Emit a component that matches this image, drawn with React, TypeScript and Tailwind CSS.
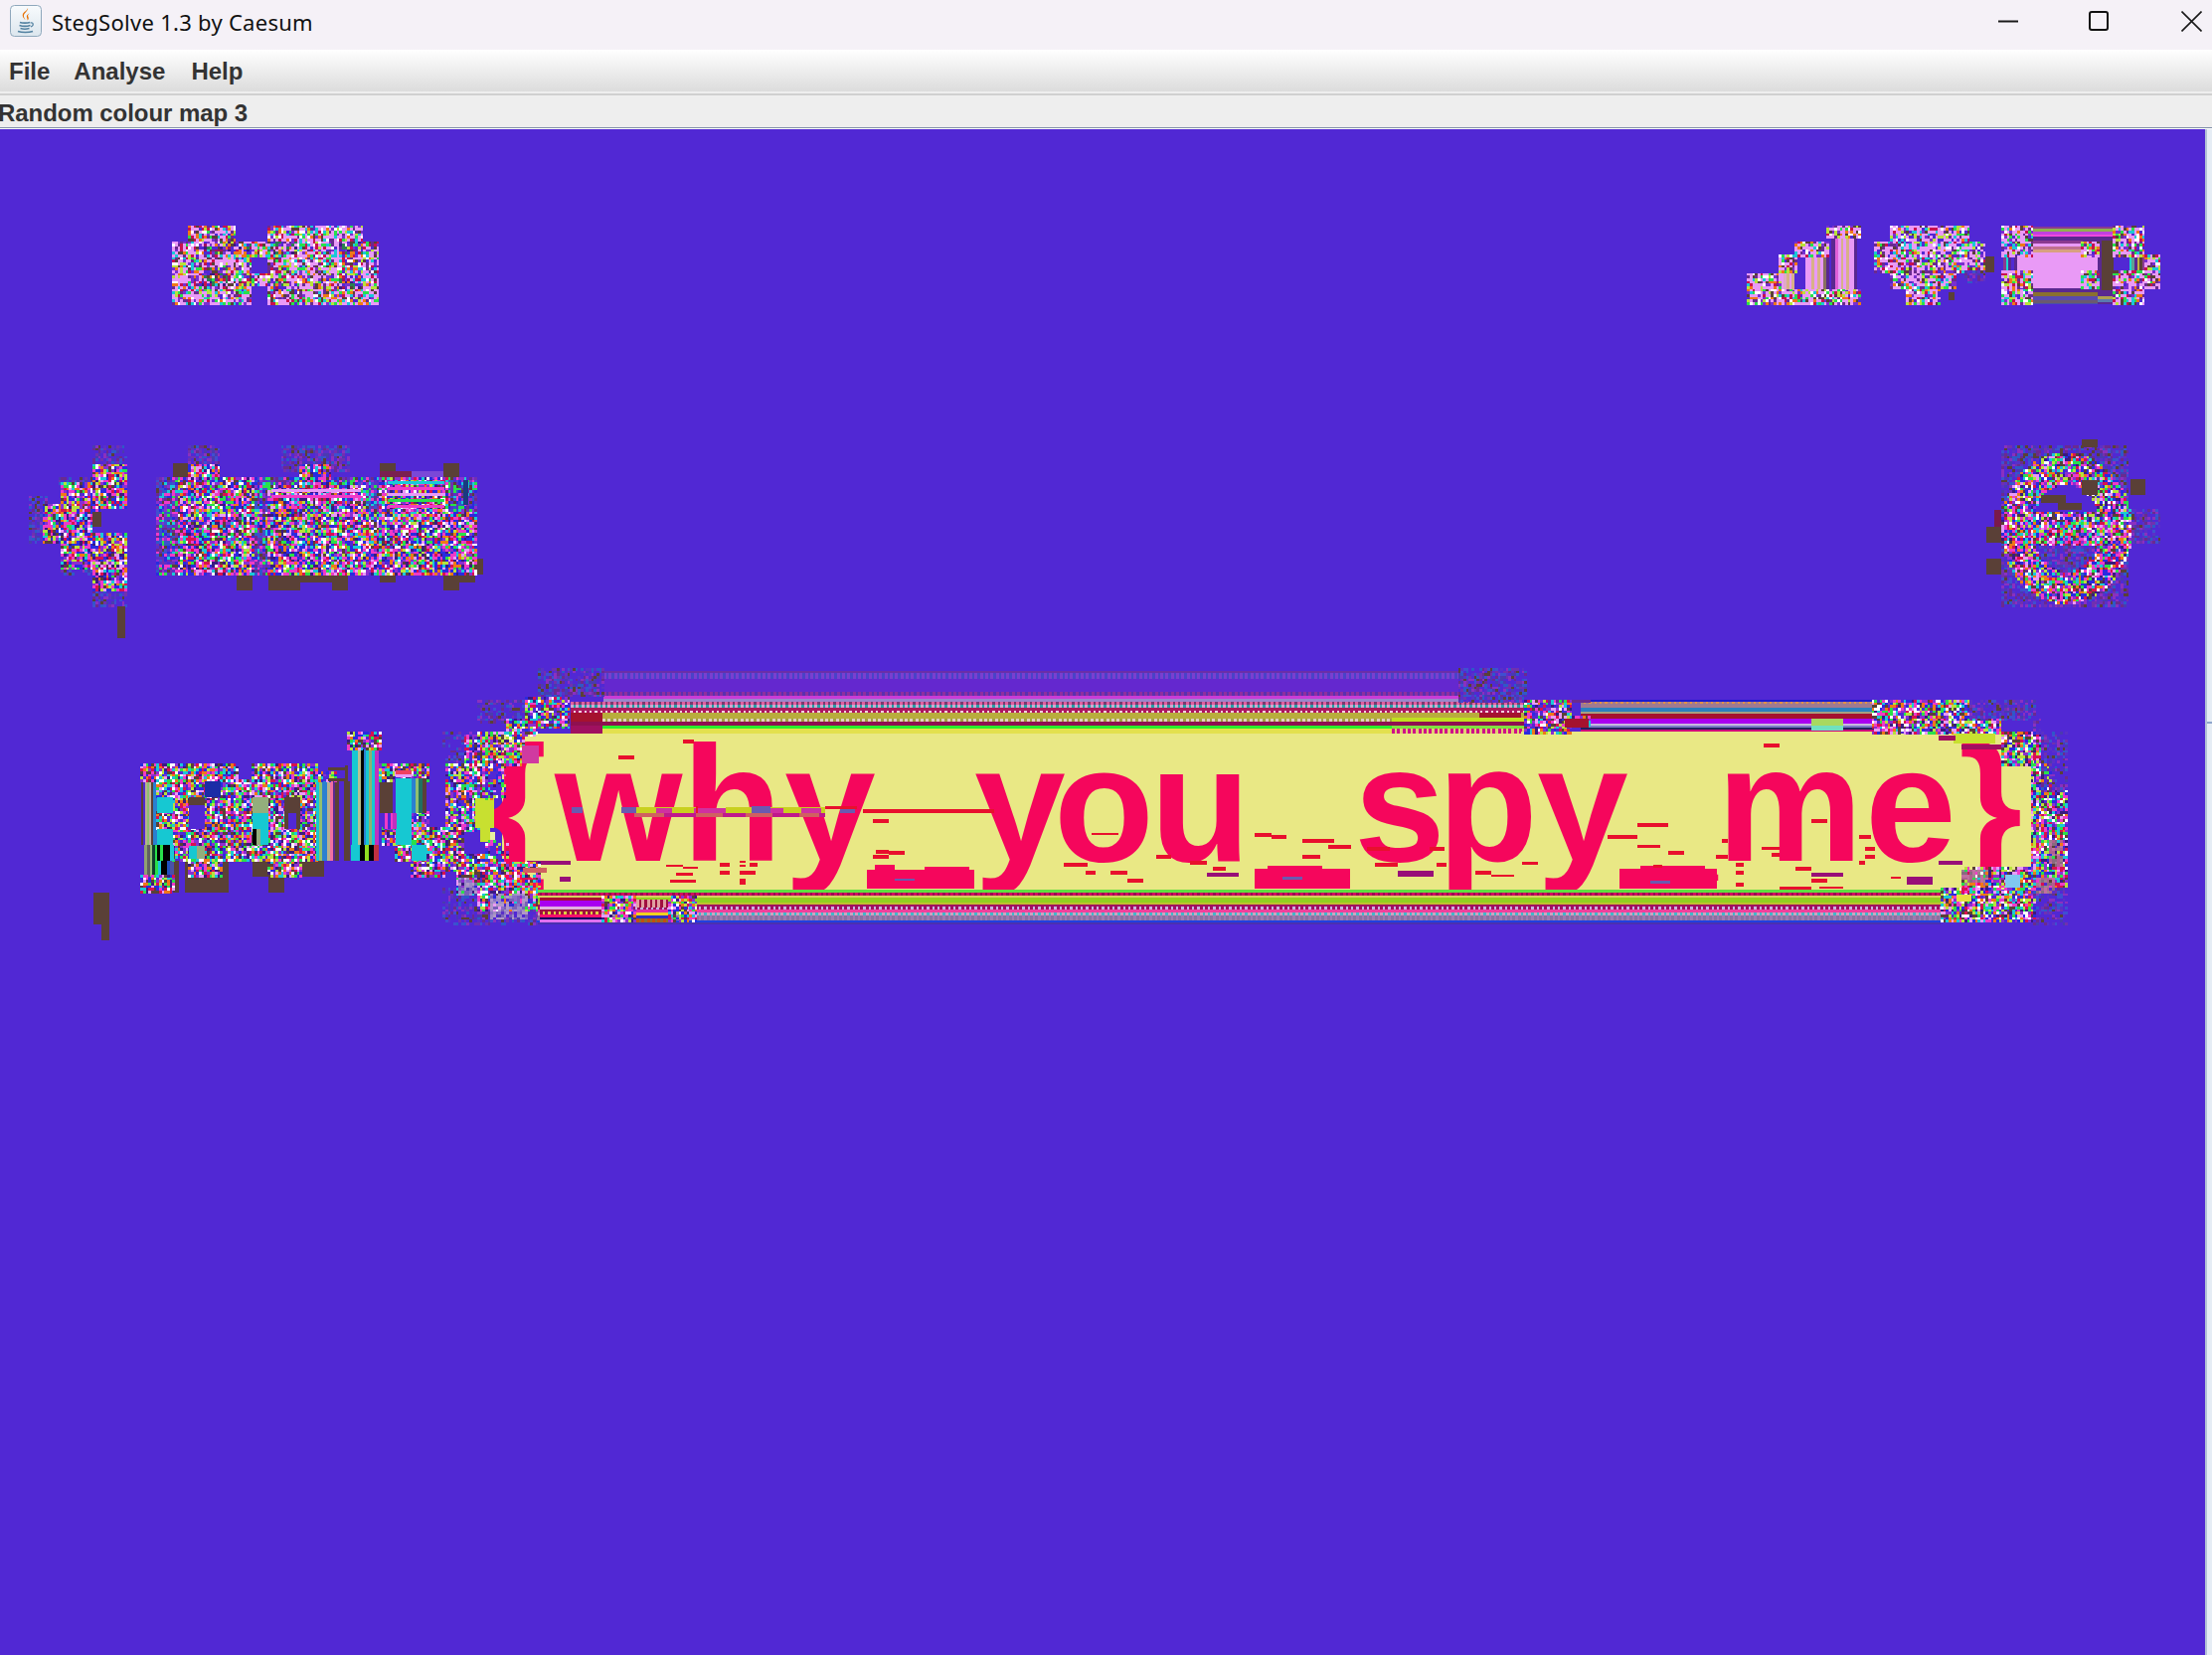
import React from 'react'

type Box = [number, number, number, number]

const CELL = 8 / 3

// zoomed crop coords -> page coords (all crops were 3x)
const at = (ox: number, oy: number, list: Box[]): Box[] =>
  list.map(([a, b, c, d]) => [ox + a / 3, oy + b / 3, ox + c / 3, oy + d / 3] as Box)

const BRIGHT = ['#e99af6', '#ffffff', '#29e04b', '#f07818', '#d8114f', '#8b2fd0', '#1ac8d8', '#3a1a80', '#b7e33a', '#f03ac8', '#2a2ae0', '#5a4037']
const PINK = ['#e99af6', '#e99af6', '#e99af6', '#e99af6', '#e99af6', '#ffffff', '#29e04b', '#f07818', '#c8114f', '#7a2fd0', '#1ac8d8', '#5a4037', '#b7e33a', '#6a2a90']
const TITLE = ['#f03ac8', '#2a2ae0', '#29e04b', '#1ac8d8', '#ffffff', '#e99af6', '#f07818', '#3a1a80', '#8b2fd0', '#5a4037', '#d8114f', '#b7e33a', '#f03ac8', '#2a2ae0']
const DIM = ['#5a30c8', '#3f4fd0', '#7030b0', '#6a2a90', '#4a3ab0', '#5a4037', '#2f58c8', '#5128d4', '#5128d4', '#8a30c0']
const SEAM = ['#5a30c8', '#3f4fd0', '#7030b0', '#6a2a90', '#2a2ae0', '#5a4037', '#2f58c8', '#f03ac8', '#1ac8d8', '#8b2fd0', '#29e04b']
const COUNTER = ['#5128d4', '#5128d4', '#7a2fd0', '#a01060', '#2a8050', '#5a4037', '#3a1a80', '#f07818']

const BROWN = '#5a4037'
const CYAN = '#16c8d2'
const YELLOW = '#e9e885'
const RED = '#f5065c'
const SPECK = '#e8102d'
const MAUVE = '#980e78'

function makeRandom(seed: number) {
  let s = seed
  return () => {
    s = (s + 0x6d2b79f5) | 0
    let t = Math.imul(s ^ (s >>> 15), 1 | s)
    t = (t + Math.imul(t ^ (t >>> 7), 61 | t)) ^ t
    return ((t ^ (t >>> 14)) >>> 0) / 4294967296
  }
}

function Noise({ boxes, palette, density = 1, seed = 1, mask }: {
  boxes: Box[]
  palette: string[]
  density?: number
  seed?: number
  mask?: (x: number, y: number) => boolean
}) {
  const rand = makeRandom(seed)
  const paths = new Map<string, string>()
  for (const [x1, y1, x2, y2] of boxes) {
    for (let i = Math.floor(x1 / CELL); i * CELL < x2 - 0.5; i++) {
      for (let j = Math.floor(y1 / CELL); j * CELL < y2 - 0.5; j++) {
        const r = rand()
        const pick = rand()
        if (r > density) continue
        const x = Math.round(i * CELL)
        const y = Math.round(j * CELL)
        if (mask && !mask(x, y)) continue
        const w = Math.round((i + 1) * CELL) - x
        const h = Math.round((j + 1) * CELL) - y
        const color = palette[Math.floor(pick * palette.length)]
        paths.set(color, (paths.get(color) ?? '') + `M${x} ${y}h${w}v${h}h-${w}z`)
      }
    }
  }
  return (
    <>
      {[...paths.entries()].map(([color, d]) => (
        <path key={color} d={d} fill={color} />
      ))}
    </>
  )
}

function Fill({ boxes, color }: { boxes: Box[]; color: string }) {
  const d = boxes.map(([a, b, c, e]) => `M${a} ${b}H${c}V${e}H${a}z`).join('')
  return <path d={d} fill={color} />
}

function VStripes({ box, colors }: { box: Box; colors: string[] }) {
  const [x1, y1, x2, y2] = box
  const w = (x2 - x1) / colors.length
  return (
    <>
      {colors.map((c, i) => (
        <rect key={i} x={x1 + i * w} y={y1} width={w + 0.5} height={y2 - y1} fill={c} />
      ))}
    </>
  )
}

function Bands({ x1, x2, rows }: { x1: number; x2: number; rows: [number, number, string, string?][] }) {
  return (
    <>
      {rows.map(([y1, y2, a, b], i) => {
        if (!b) return <rect key={i} x={x1} y={y1} width={x2 - x1} height={y2 - y1} fill={a} />
        let d = ''
        for (let x = x1; x < x2; x += CELL * 2) d += `M${Math.round(x)} ${y1}h3v${y2 - y1}h-3z`
        return (
          <g key={i}>
            <rect x={x1} y={y1} width={x2 - x1} height={y2 - y1} fill={a} />
            <path d={d} fill={b} />
          </g>
        )
      })}
    </>
  )
}

function StatusBar() {
  const z = (list: Box[]) => at(1720, 200, list)
  return (
    <>
      <Noise seed={11} palette={PINK} boxes={at(0, 200, [[570, 80, 710, 130], [525, 130, 760, 315], [760, 130, 810, 170], [760, 225, 810, 265], [810, 80, 1095, 130], [810, 130, 1145, 315]])} density={0.97} />
      <Noise seed={16} palette={COUNTER} density={0.6} boxes={at(0, 200, [[610, 130, 760, 165], [610, 215, 690, 265], [810, 130, 890, 165], [810, 250, 890, 285], [1030, 130, 1090, 165], [1030, 235, 1090, 270]])} />
      {/* signal */}
      {z([[212, 222, 265, 275]]).map((b, i) => <VStripes key={i} box={b} colors={['#e99af6', '#e0a8c8', '#d8b088', '#e99af6', '#d8b088', '#5128d4']} />)}
      {z([[288, 172, 352, 275]]).map((b, i) => <VStripes key={i} box={b} colors={['#e99af6', '#e99af6', '#d8b088', '#e99af6', '#d8b088', '#e99af6', '#8a7060']} />)}
      {z([[378, 120, 436, 275]]).map((b, i) => <VStripes key={i} box={b} colors={['#e060d8', '#e99af6', '#d8b088', '#e99af6', '#d8b088', '#e99af6', '#e99af6']} />)}
      <Fill color="#5a2890" boxes={z([[366, 120, 378, 275], [436, 120, 444, 275], [352, 172, 360, 275]])} />
      <Noise seed={12} palette={PINK} boxes={z([[115, 225, 210, 315], [210, 175, 265, 222], [210, 275, 360, 315], [260, 128, 355, 172], [355, 80, 450, 120], [355, 275, 450, 315]])} density={0.97} />
      {/* wifi */}
      <Noise seed={13} palette={PINK} boxes={z([[548, 80, 785, 128], [500, 128, 832, 222], [548, 222, 738, 270], [595, 270, 690, 315]])} density={0.9} />
      <Fill color={BROWN} boxes={z([[832, 175, 858, 222], [720, 282, 738, 305]])} />
      <Noise seed={14} palette={DIM} boxes={z([[770, 222, 832, 250]])} density={0.6} />
      {/* battery */}
      <Bands x1={1720 + 975 / 3} x2={1720 + 1220 / 3} rows={[[228, 230, '#8a3a90'], [230, 233, '#90b050'], [233, 236, '#c040e0'], [236, 238, '#f048e0'], [238, 242, '#5a2890']]} />
      <Bands x1={1720 + 975 / 3} x2={1720 + 1125 / 3} rows={[[242, 245, '#8a3a90'], [245, 248, '#e99af6'], [248, 251, '#c07090'], [251, 254, '#d8a080'], [254, 257, '#e99af6']]} />
      <Fill color="#e99af6" boxes={z([[925, 170, 1170, 270]])} />
      <Fill color="#5a2890" boxes={z([[1125, 125, 1170, 128], [1170, 125, 1182, 275], [975, 270, 1220, 282]])} />
      <Fill color={BROWN} boxes={z([[1182, 125, 1218, 275]])} />
      {z([[885, 170, 925, 222]]).map((b, i) => <VStripes key={i} box={b} colors={['#8a3a90', '#18d8d0', '#5a2890', '#5128d4', '#5a2890']} />)}
      {z([[1265, 170, 1312, 222]]).map((b, i) => <VStripes key={i} box={b} colors={['#18d8d0', '#60a090', '#5a2890', '#c0b040', '#5a4037', '#8a3a90']} />)}
      <Bands x1={1720 + 975 / 3} x2={1720 + 1170 / 3} rows={[[294, 298, '#8a7030'], [298, 302, '#5a4ab0'], [302, 306, '#4a50a8']]} />
      <Bands x1={1720 + 1170 / 3} x2={1720 + 1220 / 3} rows={[[294, 298, '#5a2890'], [298, 301, '#b0a050'], [301, 304, '#5a7ab0'], [304, 306, '#5a2890']]} />
      <Fill color="#6a5a70" boxes={z([[975, 305, 1170, 315]])} />
      <Noise seed={15} palette={PINK} boxes={z([[885, 80, 975, 170], [1222, 80, 1312, 170], [885, 222, 975, 315], [1222, 222, 1312, 315], [1125, 128, 1170, 170], [925, 222, 975, 270], [1125, 222, 1170, 270], [1312, 175, 1360, 270]])} density={0.95} />
    </>
  )
}

function NavBar() {
  const left = (list: Box[]) => at(0, 200, list)
  const right = (list: Box[]) => at(1720, 200, list)
  const gx = 1720 + 1072 / 3
  const gy = 200 + 990 / 3
  const ring = (x: number, y: number) => {
    const o = ((x - gx) / 66) ** 2 + ((y - gy) / 76) ** 2
    const i = ((x - gx) / 34) ** 2 + ((y - gy) / 44) ** 2
    const bar = Math.abs(y - gy) < 18 && Math.abs(x - gx) < 48
    return o < 1 && (i > 1 || bar)
  }
  return (
    <>
      {/* back arrow */}
      <Noise seed={21} palette={DIM} density={0.8} boxes={left([[280, 750, 380, 800], [90, 900, 140, 1040], [180, 845, 280, 870], [185, 1110, 280, 1135], [280, 1170, 380, 1230]])} />
      <Noise seed={22} palette={TITLE} density={0.97} boxes={left([[280, 800, 380, 930], [185, 860, 300, 945], [135, 925, 280, 1040], [185, 1010, 380, 1115], [280, 1040, 380, 1180]])} />
      <Fill color={BROWN} boxes={left([[355, 1230, 378, 1325], [280, 945, 305, 990]])} />
      {/* page title */}
      <Fill color={BROWN} boxes={left([[522, 798, 570, 845], [1147, 798, 1195, 845], [1338, 798, 1386, 845], [715, 1135, 762, 1182], [810, 1135, 905, 1182], [905, 1135, 1050, 1158], [1003, 1158, 1050, 1182], [1147, 1135, 1195, 1158], [1338, 1135, 1386, 1182], [1386, 1135, 1434, 1158], [1434, 1087, 1458, 1135]])} />
      <Fill color="#7a2050" boxes={left([[1147, 822, 1242, 845]])} />
      <Fill color="#7a48d8" boxes={left([[1242, 822, 1338, 845]])} />
      <Noise seed={23} palette={DIM} density={0.9} boxes={left([[570, 750, 665, 800], [855, 745, 1050, 820]])} />
      <Noise seed={27} palette={SEAM} density={0.98} boxes={left([[475, 845, 540, 1135], [1350, 845, 1434, 940], [765, 845, 810, 945], [765, 1000, 810, 1135], [1105, 845, 1150, 945], [810, 845, 1105, 865]])} />
      <Noise seed={24} palette={TITLE} density={0.97} boxes={left([[570, 800, 665, 845], [905, 800, 1000, 865], [540, 845, 765, 1135], [810, 1000, 1440, 1135], [765, 945, 1440, 1000], [810, 865, 1105, 945], [1150, 845, 1350, 940]])} />
      <Bands x1={1170 / 3} x2={1340 / 3} rows={[[484, 487, '#1ac8d8'], [490, 493, '#f03ac8'], [496, 499, '#e99af6'], [502, 505, '#29e04b'], [508, 511, '#f03ac8']]} />
      <Bands x1={820 / 3} x2={1090 / 3} rows={[[492, 495, '#e99af6'], [498, 501, '#f03ac8']]} />
      <Fill color="#1a3a80" boxes={left([[1398, 850, 1412, 925]])} />
      {/* settings gear */}
      <Noise seed={25} palette={DIM} density={0.92} boxes={right([[880, 750, 1265, 1230], [1270, 940, 1360, 1040]])} mask={(x, y) => {
        const top = y < gy - 16 && ((x - gx) / 34) ** 2 + ((y - gy) / 44) ** 2 < 1
        return !top
      }} />
      <Noise seed={26} palette={TITLE} density={0.97} boxes={right([[870, 750, 1290, 1230]])} mask={ring} />
      <Fill color={BROWN} boxes={right([[1122, 727, 1170, 750], [1122, 850, 1170, 893], [1270, 847, 1314, 893], [835, 990, 880, 1037], [835, 1087, 880, 1133], [1000, 893, 1075, 918], [1050, 918, 1122, 940]])} />
      <Fill color="#7a1a4a" boxes={right([[858, 940, 880, 990]])} />
    </>
  )
}

function PolLetters() {
  const z = (list: Box[]) => at(90, 720, list)
  const [pStem] = z([[156, 197, 204, 390]])
  const [pStem2] = z([[164, 390, 252, 485]])
  const [oRight] = z([[684, 197, 750, 437]])
  const [lBar] = z([[792, 102, 870, 437]])
  const [uRight] = z([[972, 190, 1014, 294]])
  const [uLeft] = z([[884, 294, 924, 342]])
  return (
    <>
      <Fill color={BROWN} boxes={z([[12, 534, 60, 630], [36, 630, 60, 678], [252, 437, 270, 533], [288, 437, 420, 533], [492, 437, 708, 485], [540, 485, 588, 533], [768, 197, 786, 437], [876, 197, 914, 294]])} />
      <VStripes box={pStem} colors={[BROWN, '#5128d4', '#b8b090', '#90c070', '#c0b0a0', BROWN, '#2a80d0', '#2a80d0']} />
      <VStripes box={pStem2} colors={['#90a070', '#606060', '#90c070', '#104030', '#29e04b', '#1ac8d8', '#000', '#000', '#2050c0', '#4a50a8']} />
      <Noise seed={31} palette={BRIGHT} density={0.95} boxes={z([[156, 150, 444, 197], [252, 197, 444, 437], [204, 197, 252, 246], [204, 294, 252, 342], [156, 485, 252, 533], [300, 437, 396, 485], [444, 197, 684, 437], [492, 150, 684, 197], [540, 437, 636, 485]])} />
      <Fill color="#5128d4" boxes={z([[300, 270, 348, 342], [600, 294, 624, 342]])} />
      <Fill color={BROWN} boxes={z([[300, 246, 348, 270], [588, 246, 636, 294], [588, 294, 600, 342], [624, 294, 636, 342]])} />
      <Fill color="#1b2ca6" boxes={z([[348, 197, 396, 246]])} />
      <Fill color={CYAN} boxes={z([[204, 246, 252, 294], [204, 342, 252, 390], [492, 294, 540, 342], [516, 342, 540, 390], [300, 394, 324, 432]])} />
      <Fill color="#93ae7c" boxes={z([[492, 246, 540, 294], [324, 394, 348, 432], [504, 342, 516, 390]])} />
      <Fill color="#000" boxes={z([[492, 342, 504, 390]])} />
      <VStripes box={z([[204, 390, 252, 437]])[0]} colors={['#000', '#29e04b', '#000', '#000', '#1ac8d8']} />
      <VStripes box={oRight} colors={[CYAN, '#90c070', '#2a80d0', '#2a80d0', '#b8b090', '#f070a0', '#5a2890', BROWN]} />
      <Noise seed={32} palette={BRIGHT} density={0.8} boxes={z([[684, 170, 744, 197]])} />
      <Fill color={BROWN} boxes={z([[720, 155, 780, 165], [720, 190, 780, 197], [770, 150, 780, 197]])} />
      <VStripes box={lBar} colors={[CYAN, CYAN, '#b8c090', '#000', '#2a80d0', CYAN, '#90b070', CYAN, '#c030c0']} />
      <Noise seed={33} palette={BRIGHT} density={0.95} boxes={z([[780, 54, 876, 102], [876, 150, 1020, 197], [884, 342, 924, 390], [924, 390, 972, 437], [972, 294, 1020, 390], [1020, 342, 1070, 485], [972, 437, 1070, 485]])} />
      <Fill color={CYAN} boxes={z([[924, 190, 972, 390], [972, 390, 1020, 437]])} />
      <Bands x1={90 + 924 / 3} x2={90 + 972 / 3} rows={[[775, 779, '#f04060'], [779, 782, '#e99af6']]} />
      <VStripes box={uRight} colors={['#2a80d0', '#90c070', '#207060', '#5a4037']} />
      <VStripes box={uLeft} colors={['#5128d4', '#f03ac8', '#5128d4', '#f03ac8', '#c030c0']} />
      <VStripes box={z([[790, 390, 870, 437]])[0]} colors={[CYAN, CYAN, '#000', '#90e020', '#000', '#c03040']} />
    </>
  )
}

const SPECKS_LEFT: Box[] = [
  [770, 252, 803, 264], [576, 300, 624, 312], [1345, 492, 1392, 504], [1353, 585, 1392, 597], [1392, 588, 1440, 600], [1345, 600, 1392, 612],
  [720, 630, 770, 636], [770, 636, 816, 642], [750, 655, 800, 662], [733, 675, 810, 684], [882, 625, 912, 636], [882, 648, 912, 660], [942, 618, 960, 624], [942, 630, 960, 636], [942, 648, 990, 660], [972, 624, 996, 636], [942, 672, 960, 690],
]

const SPECKS_RIGHT: Box[] = [
  [162, 204, 210, 216], [306, 432, 354, 444], [450, 480, 486, 492], [468, 516, 498, 528], [468, 540, 498, 552], [450, 558, 468, 570], [258, 576, 306, 588], [78, 564, 102, 576], [78, 588, 102, 600], [306, 612, 354, 624], [330, 636, 402, 642], [210, 636, 306, 648], [546, 606, 576, 612], [78, 624, 102, 636], [18, 540, 54, 552], [156, 516, 210, 526], [186, 534, 210, 546], [36, 492, 54, 504],
]

// the rest are from the wide crop: x = 1000 + zx / 1.28, y = 640 + zy / 3
const specksWide = (list: Box[]): Box[] =>
  list.map(([a, b, c, d]) => [1000 + a / 1.28, 640 + b / 3, 1000 + c / 1.28, 640 + d / 3] as Box)

const SPECKS_MID = specksWide([
  [335, 594, 357, 606], [357, 600, 376, 612], [397, 612, 438, 624], [397, 660, 420, 672], [430, 630, 460, 642], [828, 564, 868, 576], [790, 600, 828, 612], [868, 648, 888, 660], [828, 630, 858, 638],
  [125, 594, 160, 600], [90, 684, 120, 696], [150, 708, 172, 720], [172, 732, 192, 744], [118, 708, 130, 720], [208, 660, 228, 672], [252, 678, 274, 690], [282, 696, 298, 708], [480, 636, 510, 648], [490, 684, 520, 696], [620, 708, 640, 720], [640, 720, 670, 726], [680, 680, 700, 690], [570, 684, 582, 696], [560, 636, 580, 648], [848, 690, 860, 700],
])

// thick underscore blobs under the flag text
const BLOBS: Box[] = [
  [872, 875, 980, 894], [880, 870, 900, 875], [930, 872, 975, 875],
  [1262, 874, 1358, 894], [1275, 871, 1330, 874],
  [1629, 874, 1727, 894], [1650, 871, 1715, 874],
]

// one x per character of the flag, measured off the reference
const FLAG = '{why_you_spy_me}'
const FLAG_X = '486 558 686 789 880 980 1060 1157 1264 1362 1446 1546 1635 1727 1876 1970'

function Banner() {
  const l = (list: Box[]) => at(430, 660, list)
  const r = (list: Box[]) => at(1720, 680, list)
  return (
    <>
      {/* top stripes */}
      <Bands x1={607} x2={1470} rows={[[675, 677, '#6a2ea8'], [677, 683, '#4a42c8', '#7a3fd0'], [683, 696, '#6428cf'], [696, 700, '#5a30b0', '#8f2ea0'], [700, 703, '#c93cd8'], [703, 706, '#9a88cc']]} />
      <Bands x1={574} x2={1535} rows={[[706, 709, '#7a3a70', '#e060a0'], [709, 712, '#26a0a8', '#d0a8d0'], [712, 715, '#a91c5a'], [715, 717, '#f0d0e0', '#b01060'], [717, 723, '#b8ad3c'], [723, 726, '#a0a040', '#e0d0c0'], [726, 730, '#8f1050'], [730, 733, '#2aee2a'], [733, 738, '#e3e04e']]} />
      <Bands x1={574} x2={606} rows={[[717, 723, '#a5122f'], [723, 726, '#a5122f'], [730, 738, '#a01060']]} />
      <Bands x1={1488} x2={1530} rows={[[717, 723, '#a5122f']]} />
      <Bands x1={1400} x2={1535} rows={[[733, 738, '#e0d070', '#d01088'], [730, 733, '#80e040'], [722, 726, '#c0e020']]} />
      <Bands x1={1590} x2={1886} rows={[[704, 706, '#1a18d0'], [706, 708, '#e09048', '#a07a90'], [708, 712, '#a07a90'], [712, 716, '#2a80c0'], [716, 718, '#a8a080'], [718, 723, '#a5122f'], [723, 728, '#a900f0'], [728, 730, '#c8b8e0'], [730, 732, '#7a7ac8'], [732, 734, '#202060'], [734, 738, '#d0087a']]} />
      <Fill color="#a8d860" boxes={[[1822, 723, 1854, 730]]} />
      <Fill color="#70e0c0" boxes={[[1822, 730, 1854, 735]]} />
      <Fill color="#6a2a90" boxes={[[1530, 704, 1600, 707]]} />
      <Noise seed={41} palette={DIM} density={0.95} boxes={[[1468, 672, 1535, 706]]} />
      <Noise seed={42} palette={DIM} density={0.9} boxes={l([[335, 42, 530, 125]])} />
      {/* yellow body */}
      <Fill color={YELLOW} boxes={[[505, 738, 2046, 895], [1530, 736, 1900, 738]]} />
      <text x={FLAG_X} y={866} fontFamily='"Liberation Sans", Arial, sans-serif' fontWeight={700} fontSize={165} fill={RED}>{FLAG}</text>
      <Fill color={RED} boxes={BLOBS} />
      <Fill color="#6a5ab0" boxes={[[1290, 882, 1310, 885], [1660, 886, 1680, 889], [900, 884, 920, 886]]} />
      {/* corrupt row across "why" */}
      <Fill color="#c8d020" boxes={[[640, 812, 700, 818], [730, 812, 800, 818], [800, 812, 830, 818]]} />
      <Fill color="#d030a0" boxes={[[660, 813, 676, 818], [698, 813, 730, 818], [760, 813, 788, 818], [806, 813, 826, 818]]} />
      <Fill color="#6a5ab0" boxes={[[575, 812, 586, 818], [625, 812, 640, 818], [756, 811, 775, 818], [845, 812, 860, 818]]} />
      <Fill color="#c0188c" boxes={[[640, 818, 830, 822]]} />
      <Fill color="#d06060" boxes={[[638, 818, 668, 822], [700, 818, 727, 822], [750, 818, 777, 822], [804, 818, 824, 822]]} />
      <Fill color={SPECK} boxes={[[868, 814, 1000, 818], [700, 811, 702, 818], [830, 811, 862, 814]]} />
      <Fill color={SPECK} boxes={at(430, 660, SPECKS_LEFT)} />
      <Fill color={SPECK} boxes={at(1720, 680, SPECKS_RIGHT)} />
      <Fill color={SPECK} boxes={SPECKS_MID} />
      <Fill color={MAUVE} boxes={[...r([[306, 594, 402, 606], [690, 558, 762, 570], [594, 606, 672, 630]]), ...l([[300, 618, 432, 630], [400, 666, 432, 680]]), ...specksWide([[274, 714, 315, 726], [1052, 714, 1092, 726], [520, 708, 566, 726]])]} />
      {/* bottom stripes */}
      <Bands x1={540} x2={1952} rows={[[895, 898, '#60e040'], [898, 901, '#980e50', '#d01060'], [901, 903, '#d8d060'], [903, 908, '#90d020'], [908, 910, '#c0c030'], [910, 912, '#a01060'], [912, 915, '#c8b0e0', '#a01060'], [915, 918, '#f0409c'], [918, 921, '#40b8c8', '#d0a0c0'], [921, 926, '#a07ab0', '#8a70a0'], [926, 928, '#2040e0'], [928, 930, '#4a30b0']]} />
      <Bands x1={543} x2={605} rows={[[903, 906, '#a5122f'], [906, 910, '#a800f0'], [910, 912, '#a800f0'], [912, 915, '#e0b0e0'], [915, 917, '#a01040'], [917, 920, '#e0d040', '#a01040'], [920, 923, '#f8106c'], [923, 925, '#000060'], [925, 928, '#e070f0']]} />
      <Bands x1={640} x2={672} rows={[[905, 909, '#a01040', '#e0a0a0'], [909, 913, '#a01040', '#e0a0a0'], [915, 918, '#e030a0'], [918, 921, '#f0d020'], [921, 924, '#3030c0'], [924, 928, '#8a7030', '#c05010']]} />
      <Noise seed={44} palette={BRIGHT} density={0.9} boxes={[[606, 902, 640, 928], [672, 902, 700, 928]]} />
      {/* corner noise, left */}
      <Noise seed={45} palette={DIM} density={0.6} boxes={l([[150, 135, 300, 200], [50, 230, 110, 330], [50, 700, 150, 810], [150, 760, 330, 810]])} />
      <Noise seed={46} palette={BRIGHT} density={0.85} boxes={l([[300, 130, 430, 215], [240, 190, 330, 240], [110, 235, 290, 330], [60, 330, 170, 530], [0, 530, 110, 650], [90, 600, 170, 720], [150, 620, 340, 700], [150, 700, 330, 770]])} />
      <Noise seed={47} palette={['#9a88c8', '#a090c0', '#7a60b8', '#b098c8', '#8a70c8']} density={0.7} boxes={l([[100, 670, 150, 720], [190, 720, 300, 790]])} />
      <Fill color="#c8e030" boxes={l([[145, 430, 200, 520], [160, 520, 190, 560]])} />
      <Fill color="#e8f0a0" boxes={l([[190, 530, 205, 560]])} />
      <Noise seed={48} palette={BRIGHT} density={0.5} boxes={l([[170, 330, 235, 430], [170, 560, 240, 640]])} />
      <Fill color="#d03aa0" boxes={l([[285, 270, 335, 325]])} />
      <Fill color="#d06060" boxes={l([[288, 640, 360, 655]])} />
      {/* seam noise, top middle */}
      <Noise seed={49} palette={BRIGHT} density={0.85} boxes={[[1535, 704, 1580, 738], [1560, 720, 1600, 730]]} />
      <Fill color="#a5122f" boxes={[[1574, 723, 1598, 732]]} />
      {/* corner noise, right */}
      <Noise seed={50} palette={BRIGHT} density={0.92} boxes={r([[495, 75, 785, 170], [785, 130, 880, 170], [880, 170, 1000, 270], [975, 270, 1030, 640], [1030, 350, 1080, 640], [700, 640, 980, 745], [760, 580, 980, 640]])} />
      <Noise seed={51} palette={DIM} density={0.7} boxes={r([[785, 75, 980, 130], [980, 130, 1000, 170], [1000, 170, 1080, 350], [980, 640, 1080, 750]])} />
      <Fill color="#c8e030" boxes={r([[735, 175, 860, 205]])} />
      <Fill color="#80c8f0" boxes={r([[890, 600, 935, 640]])} />
      <Noise seed={52} palette={['#a08090', '#b06090', '#c070a0', '#8a6a80']} density={0.7} boxes={r([[765, 590, 840, 630], [985, 615, 1040, 650], [1025, 500, 1060, 570]])} />
      <Fill color="#e8e040" boxes={r([[745, 660, 790, 680]])} />
      <Fill color="#a01060" boxes={r([[690, 180, 740, 195], [760, 208, 880, 222]])} />
    </>
  )
}

function StegImage() {
  return (
    <svg className="block" width={2218} height={1535} viewBox="0 130 2218 1535" shapeRendering="crispEdges">
      <rect x={0} y={130} width={2218} height={1535} fill="#5128d4" />
      <StatusBar />
      <NavBar />
      <PolLetters />
      <Banner />
    </svg>
  )
}

function JavaIcon() {
  return (
    <svg width={32} height={32} viewBox="0 0 32 32">
      <defs>
        <linearGradient id="tile" x1="0" y1="0" x2="0" y2="1">
          <stop offset="0" stopColor="#f8fbfd" />
          <stop offset="1" stopColor="#dce6ee" />
        </linearGradient>
      </defs>
      <rect x={0.5} y={0.5} width={31} height={31} rx={4} fill="url(#tile)" stroke="#8fa8bc" />
      <path d="M18 3c1 3-5 5-4 9 .3 1 1 2 1.500 3-1.500-1.500-3.500-3.500-2.500-6 1-2.500 4.500-3 5-6z" fill="#e76f00" />
      <path d="M20 8c-3 1.500-3.500 3-3 4.500.3 1 .8 1.800 .5 3 1.500-1 1.500-2.500 .8-3.800-.5-1.200 0-2.400 1.700-3.700z" fill="#e76f00" />
      <path d="M10 17.500c2 .8 8 .8 10 0M9.500 20.500c3 1 8 1 11 0M10.500 23.500c2.500 .8 6.500 .8 9 0M8 26.500c4 1.400 11 1.400 15 0" fill="none" stroke="#5382a1" strokeWidth={1.600} />
      <path d="M20.500 18c3-.8 4 2.500 .5 4" fill="none" stroke="#5382a1" strokeWidth={1.200} />
    </svg>
  )
}

function WindowButtons() {
  return (
    <div className="flex items-center">
      <svg width={20} height={20} viewBox="0 0 20 20" className="mr-[71px]">
        <path d="M0 10.500H20" stroke="#1a1a1a" strokeWidth={2} />
      </svg>
      <svg width={20} height={20} viewBox="0 0 20 20" className="mr-[73px]">
        <rect x={1} y={1} width={18} height={18} rx={2} fill="none" stroke="#111" strokeWidth={2} />
      </svg>
      <svg width={21} height={21} viewBox="0 0 21 21" className="mr-[10px]">
        <path d="M.5 .5L20.500 20.500M20.500 .5L.5 20.500" stroke="#1a1a1a" strokeWidth={1.600} />
      </svg>
    </div>
  )
}

export default function App() {
  return (
    <div className="w-[2225px] h-[1665px] overflow-hidden flex flex-col bg-[#eeeeee]">
      <div className="h-[50px] bg-[#f5f1f7] flex items-center justify-between">
        <div className="flex items-center pl-[10px] gap-[10px] -mt-[8px]">
          <JavaIcon />
          <span className="pt-[2px] text-[22px] text-[#111] font-['Noto_Sans',sans-serif] tracking-[0.28px]">StegSolve 1.3 by Caesum</span>
        </div>
        <div className="-mt-[8px]">
          <WindowButtons />
        </div>
      </div>
      <div className="h-[42px] pt-[2px] bg-gradient-to-b from-white to-[#dcdcdc] flex items-center pl-[9px] text-[24px] font-bold text-[#333] font-['Liberation_Sans',sans-serif]">
        <span className="mr-[24px]">File</span>
        <span className="mr-[26px]">Analyse</span>
        <span>Help</span>
      </div>
      <div className="h-[2px] bg-[#eeeeee]" />
      <div className="h-[2px] bg-[#d0d0d0]" />
      <div className="h-[32px] pt-[3px] bg-[#eeeeee] flex items-center text-[24px] font-bold text-[#333] font-['Liberation_Sans',sans-serif] whitespace-nowrap">
        <span className="-ml-[2px] tracking-[-0.05px]">Random colour map 3</span>
      </div>
      <div className="h-[2px] bg-[#7f8fa8] border-b border-white" />
      <div className="flex flex-1 min-h-0">
        <StegImage />
        <div className="flex-1 border-l-2 border-[#b4c2d6] bg-[#e6edf5]">
          <div className="h-[596px]" />
          <div className="h-[2px] bg-[#8fa6cc]" />
        </div>
      </div>
    </div>
  )
}
